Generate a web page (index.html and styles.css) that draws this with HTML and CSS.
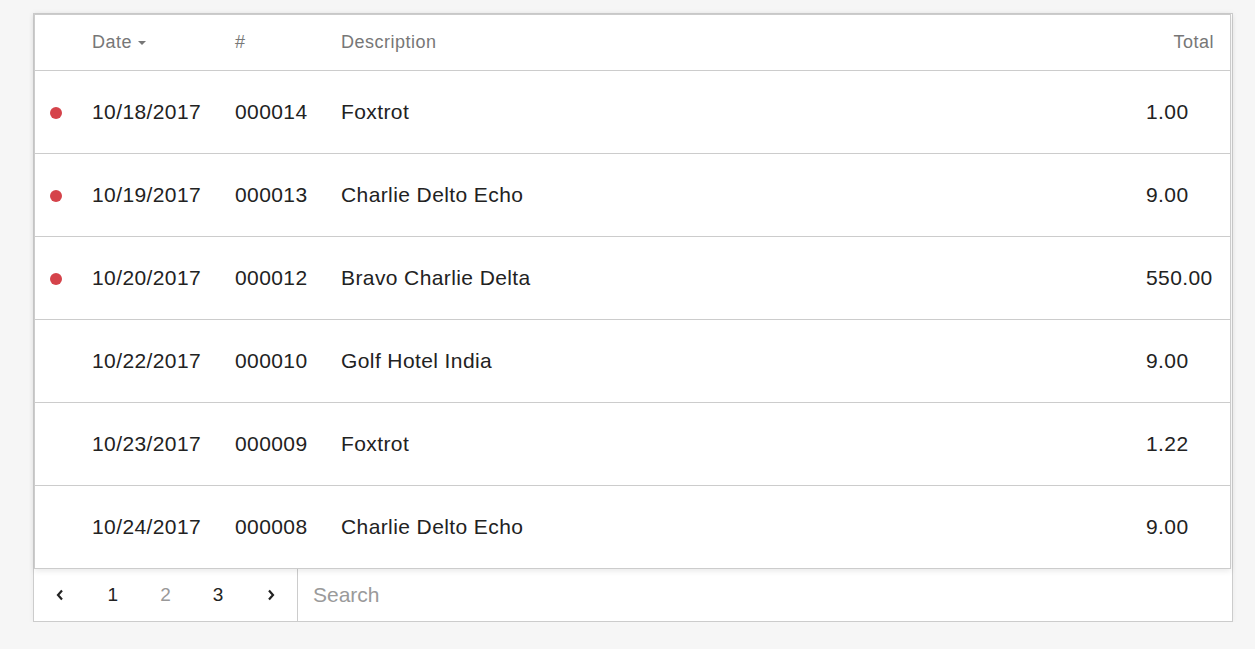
FILE: index.html
```html
<!DOCTYPE html>
<html>
<head>
<meta charset="utf-8">
<link rel="stylesheet" href="styles.css">
</head>
<body>
<div class="panel">
  <div class="table">
    <div class="row head">
      <div class="cell"></div>
      <div class="cell">Date<span class="caret"></span></div>
      <div class="cell">#</div>
      <div class="cell">Description</div>
      <div class="cell right">Total</div>
    </div>
    <div class="row">
      <div class="cell"><span class="dot"></span></div>
      <div class="cell">10/18/2017</div>
      <div class="cell">000014</div>
      <div class="cell">Foxtrot</div>
      <div class="cell">1.00</div>
    </div>
    <div class="row">
      <div class="cell"><span class="dot"></span></div>
      <div class="cell">10/19/2017</div>
      <div class="cell">000013</div>
      <div class="cell">Charlie Delto Echo</div>
      <div class="cell">9.00</div>
    </div>
    <div class="row">
      <div class="cell"><span class="dot"></span></div>
      <div class="cell">10/20/2017</div>
      <div class="cell">000012</div>
      <div class="cell">Bravo Charlie Delta</div>
      <div class="cell">550.00</div>
    </div>
    <div class="row">
      <div class="cell"></div>
      <div class="cell">10/22/2017</div>
      <div class="cell">000010</div>
      <div class="cell">Golf Hotel India</div>
      <div class="cell">9.00</div>
    </div>
    <div class="row">
      <div class="cell"></div>
      <div class="cell">10/23/2017</div>
      <div class="cell">000009</div>
      <div class="cell">Foxtrot</div>
      <div class="cell">1.22</div>
    </div>
    <div class="row">
      <div class="cell"></div>
      <div class="cell">10/24/2017</div>
      <div class="cell">000008</div>
      <div class="cell">Charlie Delto Echo</div>
      <div class="cell">9.00</div>
    </div>
  </div>
  <div class="footer">
    <div class="pager">
      <div class="page"><svg width="8" height="12" viewBox="0 0 8 12"><path d="M6 1.5 L2 6 L6 10.5" fill="none" stroke="#222" stroke-width="2.2"/></svg></div>
      <div class="page">1</div>
      <div class="page muted">2</div>
      <div class="page">3</div>
      <div class="page"><svg width="8" height="12" viewBox="0 0 8 12"><path d="M2 1.5 L6 6 L2 10.5" fill="none" stroke="#222" stroke-width="2.2"/></svg></div>
    </div>
    <input class="search" type="text" placeholder="Search">
  </div>
</div>
</body>
</html>
```
FILE: styles.css
```css
html, body {
  margin: 0;
  padding: 0;
}
body {
  background: #f6f6f6;
  font-family: "Liberation Sans", Arial, sans-serif;
  color: #222;
}
.panel {
  margin: 13px 0 0 33px;
  width: 1198px;
  height: 607px;
  border: 1px solid #cccccc;
  background: #fff;
  box-shadow: 0 0 6px rgba(0, 0, 0, 0.05);
  display: flex;
  flex-direction: column;
}
.table {
  width: 1195px;
  border: 1px solid #cccccc;
  background: #fff;
  box-shadow: 0 2px 6px rgba(0, 0, 0, 0.09);
  position: relative;
  z-index: 1;
}
.row {
  display: grid;
  grid-template-columns: 57px 143px 106px 1fr 69px;
  padding-right: 15px;
  height: 82px;
  align-items: center;
  border-bottom: 1px solid #cccccc;
  font-size: 21px;
  letter-spacing: 0.4px;
}
.row:last-child {
  border-bottom: none;
}
.row.head {
  height: 55px;
  font-size: 18px;
  color: #777;
  letter-spacing: 0.5px;
}
.cell {
  white-space: nowrap;
  display: flex;
  align-items: center;
}
.cell.right {
  justify-content: flex-end;
  padding-right: 1px;
}
.dot {
  width: 12px;
  height: 12px;
  border-radius: 50%;
  background: #d5434a;
  margin-left: 15px;
  margin-top: 1px;
}
.caret {
  width: 0;
  height: 0;
  border-left: 4px solid transparent;
  border-right: 4px solid transparent;
  border-top: 4px solid #777;
  margin-left: 6px;
  margin-top: 1px;
}
.footer {
  flex: 1;
  display: flex;
}
.pager {
  width: 263px;
  display: flex;
  border-right: 1px solid #cccccc;
}
.page {
  flex: 1;
  display: flex;
  align-items: center;
  justify-content: center;
  font-size: 19px;
  color: #222;
}
.page.muted {
  color: #999;
}
.search {
  flex: 1;
  border: none;
  outline: none;
  background: transparent;
  font-family: "Liberation Sans", Arial, sans-serif;
  font-size: 21px;
  padding: 0 0 0 15px;
  color: #222;
}
.search::placeholder {
  color: #9a9a9a;
}
```
